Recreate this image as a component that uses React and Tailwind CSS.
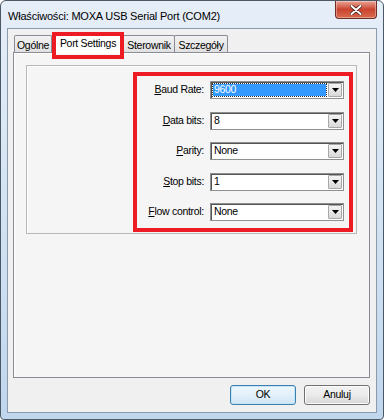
import { useState } from 'react';

const fields = [
    { key: 'B', rest: 'aud Rate:', value: '9600', focused: true },
    { key: 'D', rest: 'ata bits:', value: '8' },
    { key: 'P', rest: 'arity:', value: 'None' },
    { key: 'S', rest: 'top bits:', value: '1' },
    { key: 'F', rest: 'low control:', value: 'None' },
];

const tabs = [
    { label: 'Ogólne', w: 'w-[38px]' },
    { label: 'Port Settings', w: 'w-[72px]' },
    { label: 'Sterownik', w: 'w-[52px]' },
    { label: 'Szczegóły', w: 'w-[54px]' },
];

function Arrow() {
    return (
        <div className="w-[14px] h-full flex items-center justify-center bg-gradient-to-b from-[#f4f4f4] to-[#d9d9d9] border border-[#a8a8a8] rounded-[1px]">
            <svg width="7" height="4" viewBox="0 0 7 4">
                <path d="M0 0h7L3.5 4z" fill="#000" />
            </svg>
        </div>
    );
}

function Combo({ value, focused }) {
    return (
        <div className="w-[134px] h-[18px] flex items-stretch bg-white border border-[#8e8f8f] shadow-[inset_1px_1px_0_#555]">
            <div className="flex-1 flex items-center pl-[2px] pr-[2px] py-[2px]">
                {focused ? (
                    <div className="w-full h-full flex items-center pl-[1px] bg-[#3399ff] outline outline-1 outline-dotted outline-[#333] text-white">
                        {value}
                    </div>
                ) : (
                    <span className="pl-[1px]">{value}</span>
                )}
            </div>
            <div className="py-[1px] pr-[1px]">
                <Arrow />
            </div>
        </div>
    );
}

export default function App() {
    const [active] = useState(1);

    return (
        <div
            className="w-[384px] h-[420px] flex flex-col bg-gradient-to-b from-[#e6eef8] via-[#d3e3f3] to-[#c0d6ed] border border-[#4b5866] rounded-t-[6px] rounded-b-[4px] text-[10.5px] tracking-[-0.3px] text-black"
            style={{ fontFamily: '"Liberation Sans", Arial, sans-serif' }}
        >
            {/* title bar */}
            <div className="h-[27px] flex items-start justify-between">
                <div className="pl-[7px] pt-[7px] text-[11px] tracking-[-0.2px] text-black">Właściwości: MOXA USB Serial Port (COM2)</div>
                <div className="mr-[6px] w-[42px] h-[18px] flex items-center justify-center rounded-b-[4px] border border-t-0 border-[#6b2c25] bg-gradient-to-b from-[#e8a394] via-[#c9432e] to-[#d86a4d] shadow-[inset_0_0_0_1px_rgba(255,255,255,0.35)]">
                    <svg width="12" height="10" viewBox="0 0 12 10">
                        <path d="M1.5 1l9 8M10.5 1l-9 8" stroke="#3b1a14" strokeWidth="3.4" strokeLinecap="round" />
                        <path d="M1.5 1l9 8M10.5 1l-9 8" stroke="#fff" strokeWidth="2" strokeLinecap="round" />
                    </svg>
                </div>
            </div>

            {/* client area */}
            <div className="mx-[6px] mb-[6px] flex-1 flex flex-col bg-[#f0f0f0] border border-[#8b9aab]">
                <div className="h-[23px] flex items-end pl-[6px] pt-[3px]">
                    {tabs.map((t, i) =>
                        i === active ? (
                            <div
                                key={t.label}
                                className={`${t.w} relative z-10 h-[21px] -mb-px flex justify-center pt-[3px] bg-white border border-b-0 border-[#898c95] rounded-t-[2px]`}
                            >
                                {t.label}
                                <div className="absolute -left-[1px] -right-[1px] -top-[1px] h-[27px] border-4 border-[#ed1c24]" />
                            </div>
                        ) : (
                            <div
                                key={t.label}
                                className={`${t.w} h-[17px] flex justify-center pt-[2px] bg-gradient-to-b from-[#f2f2f2] to-[#e1e1e1] border border-b-0 border-[#898c95] rounded-t-[2px] -ml-px first:ml-0`}
                            >
                                {t.label}
                            </div>
                        )
                    )}
                </div>

                {/* tab panel */}
                <div className="ml-[5px] w-[357px] h-[326px] bg-[#f5f5f5] border border-[#898c95] shadow-[inset_1px_1px_0_#fff] pl-[12px] pt-[12px]">
                    <div className="w-[331px] h-[169px] border border-[#b8b8b8] shadow-[inset_1px_1px_0_#fff] flex justify-end pr-[3px] pt-[6px]">
                        <div className="w-[220px] h-[160px] border-4 border-[#ed1c24] flex flex-col gap-[12.5px] pt-[5px] pr-[5px]">
                            {fields.map((f) => (
                                <div key={f.key} className="flex items-center justify-end gap-[6px]">
                                    <span>
                                        <span className="underline">{f.key}</span>
                                        {f.rest}
                                    </span>
                                    <Combo value={f.value} focused={f.focused} />
                                </div>
                            ))}
                        </div>
                    </div>
                </div>

                {/* buttons */}
                <div className="ml-[5px] w-[357px] flex justify-end gap-[8px] mt-[7px]">
                    <button className="w-[66px] h-[20px] rounded-[3px] border border-[#3c7fb1] bg-gradient-to-b from-[#eef7fd] via-[#e3f0fa] to-[#cfe5f6] shadow-[inset_0_0_0_1px_#c6e4f7]">
                        OK
                    </button>
                    <button className="w-[66px] h-[20px] rounded-[3px] border border-[#707070] bg-gradient-to-b from-[#f2f2f2] via-[#ebebeb] to-[#d6d6d6] shadow-[inset_0_0_0_1px_#fcfcfc]">
                        Anuluj
                    </button>
                </div>
            </div>
        </div>
    );
}
